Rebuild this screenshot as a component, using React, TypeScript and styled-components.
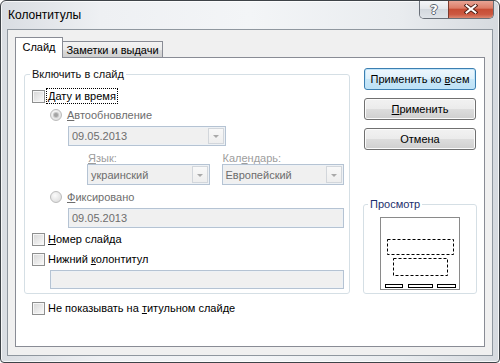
import React from 'react';
import styled, { createGlobalStyle } from 'styled-components';

const Global = createGlobalStyle`
  html, body { margin: 0; padding: 0; width: 500px; height: 363px; overflow: hidden; background: #fff; }
  body { font-family: "Liberation Sans", Arial, sans-serif; font-size: 11px; color: #000; }
  * { box-sizing: border-box; }
`;

const Window = styled.div`
  width: 500px;
  height: 363px;
  border: 1px solid #3e4348;
  border-radius: 6px 6px 4px 4px;
  background: linear-gradient(90deg, #d9dde2 0%, #eef0f3 20%, #f3f5f7 50%, #e9ecef 80%, #d6dadf 100%);
  box-shadow: inset 0 0 0 1px rgba(255, 255, 255, 0.75);
  display: flex;
  flex-direction: column;
  overflow: hidden;
`;

const TitleBar = styled.div`
  height: 28px;
  display: flex;
  align-items: flex-start;
  padding: 0 5px 0 7px;
  flex-shrink: 0;
`;

const Title = styled.div`
  font-size: 12px;
  line-height: 28px;
  color: #000;
`;

const Controls = styled.div`
  margin-left: auto;
  margin-top: -1px;
  display: flex;
  height: 19px;
  border: 1px solid #6a7079;
  border-top: none;
  border-radius: 0 0 5px 5px;
  overflow: hidden;
`;

const CtlButton = styled.div<{ $close?: boolean }>`
  width: ${p => (p.$close ? 45 : 28)}px;
  display: flex;
  align-items: center;
  justify-content: center;
  border-left: ${p => (p.$close ? '1px solid #7a3a2e' : 'none')};
  background: ${p =>
    p.$close
      ? 'linear-gradient(180deg, #e9a99b 0%, #dc7d67 45%, #c74d35 52%, #cc5841 80%, #dd8770 100%)'
      : 'linear-gradient(180deg, #f7f8fa 0%, #e4e7eb 48%, #d3d8de 52%, #dfe3e8 100%)'};
  box-shadow: inset 0 1px 0 rgba(255,255,255,0.6);
`;

const HelpGlyph = styled.span`
  font-family: "DejaVu Sans", sans-serif;
  font-weight: bold;
  font-size: 13px;
  line-height: 1;
  color: #fff;
  text-shadow: 1px 0 0 #5c6570, -1px 0 0 #5c6570, 0 1px 0 #5c6570, 0 -1px 0 #5c6570;
`;

const Client = styled.div`
  flex: 1;
  margin: 0 6px 6px 6px;
  border: 1px solid #8f979f;
  background: #f0f0f0;
  padding: 7px 7px 8px 7px;
  display: flex;
  flex-direction: column;
`;

const TabStrip = styled.div`
  display: flex;
  align-items: flex-end;
  position: relative;
  z-index: 2;
`;

const Tab = styled.div<{ $active?: boolean }>`
  height: ${p => (p.$active ? 21 : 16)}px;
  width: ${p => (p.$active ? 48 : 100)}px;
  margin-bottom: ${p => (p.$active ? -1 : 0)}px;
  border: 1px solid #898c95;
  border-bottom: none;
  border-left: ${p => (p.$active ? '1px solid #898c95' : 'none')};
  background: ${p => (p.$active ? '#fff' : 'linear-gradient(180deg, #f3f3f3 0%, #ebebeb 50%, #dddddd 50%, #cfcfcf 100%)')};
  display: flex;
  align-items: center;
  justify-content: center;
  padding-bottom: ${p => (p.$active ? 2 : 0)}px;
  font-size: 11px;
  white-space: nowrap;
`;

const Panel = styled.div`
  flex: 1;
  border: 1px solid #898c95;
  background: #fff;
  padding: 9px 0 0 8px;
  display: grid;
  grid-template-columns: 326px 114px;
  grid-template-rows: auto auto;
  column-gap: 13px;
  row-gap: 6px;
  align-content: start;
`;

const Group = styled.fieldset`
  margin: 0;
  padding: 0;
  min-width: 0;
  border: 1px solid #d5dfe5;
  border-radius: 3px;
`;

const Legend = styled.legend<{ $blue?: boolean }>`
  margin-left: ${p => (p.$blue ? 4 : 5)}px;
  padding: 0 2px;
  font-size: 11px;
  line-height: 14px;
  color: ${p => (p.$blue ? '#1d2f6d' : '#111')};
`;

const GroupBody = styled.div`
  padding: 7px 5px 4px 7px;
  display: flex;
  flex-direction: column;
`;

const Line = styled.div<{ $h: number; $mt?: number; $indent?: number; $gap?: number }>`
  display: flex;
  align-items: center;
  height: ${p => p.$h}px;
  margin-top: ${p => p.$mt ?? 0}px;
  padding-left: ${p => p.$indent ?? 0}px;
  gap: ${p => p.$gap ?? 0}px;
  flex-shrink: 0;
`;

const OuterLine = styled(Line)`
  margin-left: 8px;
`;

const Check = styled.span`
  width: 13px;
  height: 13px;
  flex-shrink: 0;
  border: 1px solid #8e8f8f;
  background: linear-gradient(135deg, #d6d6d6 0%, #e8e8e8 50%, #fbfbfb 100%);
  box-shadow: inset 0 0 0 1px #f6f6f6;
  margin-right: 2px;
`;

const Radio = styled.span<{ $checked?: boolean }>`
  width: 12px;
  height: 12px;
  flex-shrink: 0;
  border-radius: 50%;
  border: 1px solid #bcbcbc;
  background: radial-gradient(circle at 40% 35%, #fbfbfb 0%, #e6e6e6 60%, #d6d6d6 100%);
  display: flex;
  align-items: center;
  justify-content: center;
  margin-right: 4px;
  &::after {
    content: '';
    display: ${p => (p.$checked ? 'block' : 'none')};
    width: 4px;
    height: 4px;
    border-radius: 50%;
    background: #a3a3a3;
    box-shadow: 0 0 0 1px #c6c6c6;
  }
`;

const Label = styled.span<{ $tone?: 'dim' | 'faint'; $focus?: boolean }>`
  font-size: 11px;
  line-height: 14px;
  white-space: nowrap;
  color: ${p => (p.$tone === 'dim' ? '#6d6d6d' : p.$tone === 'faint' ? '#9d9d9d' : '#000')};
  outline: ${p => (p.$focus ? '1px dotted #000' : 'none')};
  outline-offset: 0px;
  padding: 0 1px;
`;

const Key = styled.span`
  text-decoration: underline;
  text-underline-offset: 1px;
`;

const Field = styled.div<{ $w?: number }>`
  ${p => (p.$w ? `width: ${p.$w}px;` : 'flex: 1;')}
  height: 100%;
  border: 1px solid #b5c3d3;
  box-shadow: inset 0 0 0 1px #edf1f5;
  background: #f0f0f0;
  display: flex;
  align-items: stretch;
  justify-content: space-between;
  color: #6d6d6d;
  font-size: 11px;
`;

const FieldText = styled.span`
  padding-left: 3px;
  display: flex;
  align-items: center;
`;

const DropButton = styled.span`
  width: 16px;
  margin: 1px;
  border: 1px solid #d2d6db;
  background: linear-gradient(180deg, #f8f8f8 0%, #eeeeee 100%);
  display: flex;
  align-items: center;
  justify-content: center;
  &::after {
    content: '';
    border-left: 3.5px solid transparent;
    border-right: 3.5px solid transparent;
    border-top: 3.5px solid #a9a9a9;
    margin-top: 1px;
  }
`;

const Pair = styled.div`
  flex: 1;
  display: flex;
  gap: 12px;
  height: 100%;
  align-items: center;
`;

const PairCell = styled.div`
  flex: 1;
  display: flex;
  height: 100%;
  align-items: center;
`;

const SideColumn = styled.div`
  display: flex;
  flex-direction: column;
  padding-top: 1px;
  gap: 8px;
`;

const Button = styled.div<{ $default?: boolean }>`
  width: 112px;
  height: 22px;
  margin-left: 1px;
  border-radius: 3px;
  border: 1px solid ${p => (p.$default ? '#3c7fb1' : '#707070')};
  background: ${p =>
    p.$default
      ? 'linear-gradient(180deg, #eef7fd 0%, #ddf0fb 50%, #c9e7f8 50%, #bde1f6 100%)'
      : 'linear-gradient(180deg, #f2f2f2 0%, #ebebeb 50%, #dddddd 50%, #cfcfcf 100%)'};
  box-shadow: inset 0 0 0 1px ${p => (p.$default ? '#c0e4f9' : '#fbfbfb')};
  display: flex;
  align-items: center;
  justify-content: center;
  font-size: 11px;
  white-space: nowrap;
`;

const ButtonText = styled.span`
  white-space: pre;
`;

const PreviewGroup = styled(Group)`
  margin-top: auto;
`;

const PreviewPage = styled.svg`
  display: block;
  margin: 6px auto 3px auto;
`;

export default function App() {
  return (
    <>
      <Global />
      <Window>
        <TitleBar>
          <Title>Колонтитулы</Title>
          <Controls>
            <CtlButton>
              <HelpGlyph>?</HelpGlyph>
            </CtlButton>
            <CtlButton $close>
              <svg width="14" height="10" viewBox="0 0 14 10">
                <path d="M2.5 1.5 L11.5 8.5 M11.5 1.5 L2.5 8.5" stroke="#4a1b12" strokeWidth="3.8" strokeLinecap="square" fill="none" />
                <path d="M2.5 1.5 L11.5 8.5 M11.5 1.5 L2.5 8.5" stroke="#ffffff" strokeWidth="2" strokeLinecap="square" fill="none" />
              </svg>
            </CtlButton>
          </Controls>
        </TitleBar>
        <Client>
          <TabStrip>
            <Tab $active>Слайд</Tab>
            <Tab>Заметки и выдачи</Tab>
          </TabStrip>
          <Panel>
            <Group>
              <Legend>Включить в слайд</Legend>
              <GroupBody>
                <Line $h={16}>
                  <Check />
                  <Label $focus><Key>Д</Key>ату и время</Label>
                </Line>
                <Line $h={16} $mt={3} $indent={18}>
                  <Radio $checked />
                  <Label $tone="dim"><Key>А</Key>втообновление</Label>
                </Line>
                <Line $h={20} $mt={3} $indent={36}>
                  <Field $w={158}>
                    <FieldText>09.05.2013</FieldText>
                    <DropButton />
                  </Field>
                </Line>
                <Line $h={13} $mt={5} $indent={55}>
                  <Pair>
                    <PairCell><Label $tone="faint"><Key>Я</Key>зык:</Label></PairCell>
                    <PairCell><Label $tone="faint">Кал<Key>е</Key>ндарь:</Label></PairCell>
                  </Pair>
                </Line>
                <Line $h={21} $indent={55}>
                  <Pair>
                    <Field>
                      <FieldText>украинский</FieldText>
                      <DropButton />
                    </Field>
                    <Field>
                      <FieldText>Европейский</FieldText>
                      <DropButton />
                    </Field>
                  </Pair>
                </Line>
                <Line $h={16} $mt={4} $indent={18}>
                  <Radio />
                  <Label $tone="dim"><Key>Ф</Key>иксировано</Label>
                </Line>
                <Line $h={20} $mt={3} $indent={36}>
                  <Field>
                    <FieldText>09.05.2013</FieldText>
                  </Field>
                </Line>
                <Line $h={16} $mt={3}>
                  <Check />
                  <Label><Key>Н</Key>омер слайда</Label>
                </Line>
                <Line $h={16} $mt={4}>
                  <Check />
                  <Label>Нижний <Key>к</Key>олонтитул</Label>
                </Line>
                <Line $h={19} $mt={3} $indent={18}>
                  <Field />
                </Line>
              </GroupBody>
            </Group>
            <SideColumn>
              <Button $default><ButtonText>Применить ко <Key>в</Key>сем</ButtonText></Button>
              <Button><ButtonText><Key>П</Key>рименить</ButtonText></Button>
              <Button><ButtonText>Отмена</ButtonText></Button>
              <PreviewGroup>
                <Legend $blue>Просмотр</Legend>
                <PreviewPage width="80" height="73" viewBox="0 0 80 73">
                  <rect x="0.5" y="0.5" width="79" height="72" fill="#fff" stroke="#8a8a8a" />
                  <rect x="7.5" y="22.5" width="66" height="15" fill="none" stroke="#000" strokeDasharray="3 2" />
                  <rect x="13.5" y="41.5" width="54" height="17" fill="none" stroke="#000" strokeDasharray="3 2" />
                  <rect x="5.5" y="67.5" width="17" height="3" fill="none" stroke="#000" />
                  <rect x="28.5" y="67.5" width="24" height="3" fill="none" stroke="#000" />
                  <rect x="57.5" y="67.5" width="18" height="3" fill="none" stroke="#000" />
                </PreviewPage>
              </PreviewGroup>
            </SideColumn>
            <OuterLine $h={16}>
              <Check />
              <Label>Не показывать на <Key>т</Key>итульном слайде</Label>
            </OuterLine>
          </Panel>
        </Client>
      </Window>
    </>
  );
}
